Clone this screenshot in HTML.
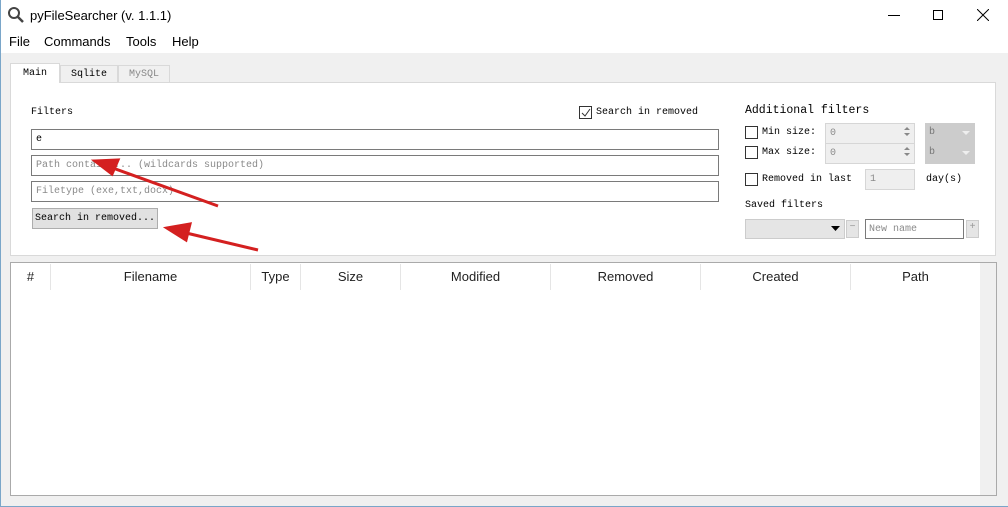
<!DOCTYPE html>
<html><head><meta charset="utf-8"><style>
*{box-sizing:border-box;margin:0;padding:0}
body{width:1008px;height:507px;overflow:hidden;background:#f0f0f0;position:relative;font-family:"Liberation Sans",sans-serif}
.a{position:absolute;white-space:nowrap}
.m{font-family:"Liberation Mono","Noto Serif CJK SC",monospace;font-size:10px;color:#000}
.in{position:absolute;background:#fff;border:1px solid #7a7a7a;height:21px;white-space:nowrap}
.ph{color:#8a8a8a}
.cb{position:absolute;width:13px;height:13px;border:1px solid #333;background:#fff}
.dis{position:absolute;background:#efefef;border:1px solid #d6d6d6}
.hd{position:absolute;top:264px;height:26px;font-size:13px;color:#222;text-align:center;line-height:26px;border-right:1px solid #e5e5e5}
</style></head><body>
<div class="a" style="left:0;top:0;width:1008px;height:53px;background:#fff"></div>
<div class="a" style="left:0;top:0;width:1px;height:507px;background:#7aa6c9"></div>
<div class="a" style="left:0;top:506px;width:1008px;height:1px;background:#7aa6c9"></div>
<svg class="a" style="left:7px;top:6px" width="18" height="18"><circle cx="7" cy="7" r="5" fill="none" stroke="#444" stroke-width="2"/><line x1="11" y1="11" x2="16" y2="16" stroke="#444" stroke-width="2.5"/></svg>
<div class="a" style="left:30px;top:8px;font-size:13px;color:#000">pyFileSearcher (v. 1.1.1)</div>
<div class="a" style="left:888px;top:15px;width:12px;height:1px;background:#000"></div>
<div class="a" style="left:933px;top:10px;width:10px;height:10px;border:1px solid #000"></div>
<svg class="a" style="left:977px;top:9px" width="12" height="12"><path d="M0 0L12 12M12 0L0 12" stroke="#000" stroke-width="1"/></svg>
<div class="a" style="left:9px;top:34px;font-size:13px">File</div>
<div class="a" style="left:44px;top:34px;font-size:13px">Commands</div>
<div class="a" style="left:126px;top:34px;font-size:13px">Tools</div>
<div class="a" style="left:172px;top:34px;font-size:13px">Help</div>
<!-- tabs -->
<div class="a" style="left:10px;top:82px;width:986px;height:174px;background:#fff;border:1px solid #d9d9d9"></div>
<div class="a m" style="left:10px;top:63px;width:50px;height:20px;background:#fff;border:1px solid #d9d9d9;border-bottom:none;text-align:center;line-height:19px">Main</div>
<div class="a m" style="left:60px;top:65px;width:58px;height:18px;background:#f0f0f0;border:1px solid #d9d9d9;text-align:center;line-height:17px">Sqlite</div>
<div class="a m" style="left:118px;top:65px;width:52px;height:18px;background:#f0f0f0;border:1px solid #d9d9d9;text-align:center;line-height:17px;color:#888">MySQL</div>
<div class="a m" style="left:31px;top:107px">Filters</div>
<div class="cb" style="left:579px;top:106px"></div>
<svg class="a" style="left:581px;top:108px" width="10" height="10"><path d="M1 5L4 8L9 1" stroke="#333" fill="none"/></svg>
<div class="a m" style="left:596px;top:107px">Search in removed</div>
<div class="in m" style="left:31px;top:129px;width:688px;padding:4px 4px">e</div>
<div class="in m ph" style="left:31px;top:155px;width:688px;padding:4px 4px">Path contains... (wildcards supported)</div>
<div class="in m ph" style="left:31px;top:181px;width:688px;padding:4px 4px">Filetype (exe,txt,docx)</div>
<div class="a m" style="left:32px;top:208px;width:126px;height:21px;background:#e1e1e1;border:1px solid #adadad;padding:4px 2px">Search in removed...</div>
<!-- additional -->
<div class="a m" style="left:745px;top:104px;font-size:11.5px">Additional filters</div>
<div class="cb" style="left:745px;top:126px"></div><div class="a m" style="left:762px;top:127px">Min size:</div>
<div class="dis m ph" style="left:825px;top:123px;width:90px;height:21px;padding:4px 4px">0</div>
<div class="a" style="left:925px;top:123px;width:50px;height:21px;background:#ccc;font-family:'Liberation Mono';font-size:10px;color:#777;padding:4px 4px">b</div>
<div class="cb" style="left:745px;top:146px"></div><div class="a m" style="left:762px;top:147px">Max size:</div>
<div class="dis m ph" style="left:825px;top:143px;width:90px;height:21px;padding:4px 4px">0</div>
<div class="a" style="left:925px;top:143px;width:50px;height:21px;background:#ccc;font-family:'Liberation Mono';font-size:10px;color:#777;padding:4px 4px">b</div>
<svg class="a" style="left:962px;top:131px" width="8" height="28"><path d="M0 0H8L4 4Z M0 20H8L4 24Z" fill="#eee"/></svg>
<svg class="a" style="left:903px;top:126px" width="8" height="60"><path d="M1 4L4 1L7 4ZM1 7L4 10L7 7Z M1 24L4 21L7 24ZM1 27L4 30L7 27Z M1 50L4 47L7 50ZM1 53L4 56L7 53Z" fill="#888"/></svg>
<div class="cb" style="left:745px;top:173px"></div><div class="a m" style="left:762px;top:174px">Removed in last</div>
<div class="dis m ph" style="left:865px;top:169px;width:50px;height:21px;padding:4px 4px">1</div>
<div class="a m" style="left:926px;top:174px">day(s)</div>
<div class="a m" style="left:745px;top:200px">Saved filters</div>
<div class="a" style="left:745px;top:219px;width:100px;height:20px;background:#e5e5e5;border:1px solid #ccc"></div>
<svg class="a" style="left:831px;top:226px" width="9" height="6"><path d="M0 0H9L4.5 5Z" fill="#000"/></svg>
<div class="a" style="left:846px;top:220px;width:13px;height:18px;background:#e5e5e5;border:1px solid #ccc;font-size:10px;color:#999;text-align:center">−</div>
<div class="in m ph" style="left:865px;top:219px;width:99px;height:20px;padding:4px 3px">New name</div>
<div class="a" style="left:966px;top:220px;width:13px;height:18px;background:#e5e5e5;border:1px solid #ccc;font-size:10px;color:#999;text-align:center">+</div>
<!-- arrows -->
<svg class="a" style="left:0;top:0" width="1008" height="507"><g stroke="#d42020" stroke-width="3" fill="#d42020"><line x1="218" y1="206" x2="110" y2="167"/><path d="M95 161L118 160L112 174Z"/><line x1="258" y1="250" x2="182" y2="232"/><path d="M167 228L190 224L186 240Z"/></g></svg>
<!-- table -->
<div class="a" style="left:10px;top:262px;width:987px;height:234px;background:#fff;border:1px solid #aaa"></div>
<div class="hd" style="left:11px;width:40px">#</div>
<div class="hd" style="left:51px;width:200px">Filename</div>
<div class="hd" style="left:251px;width:50px">Type</div>
<div class="hd" style="left:301px;width:100px">Size</div>
<div class="hd" style="left:401px;width:150px">Modified</div>
<div class="hd" style="left:551px;width:150px">Removed</div>
<div class="hd" style="left:701px;width:150px">Created</div>
<div class="hd" style="left:851px;width:129px;border-right:none">Path</div>
<div class="a" style="left:980px;top:263px;width:16px;height:232px;background:#f0f0f0"></div>
</body></html>
